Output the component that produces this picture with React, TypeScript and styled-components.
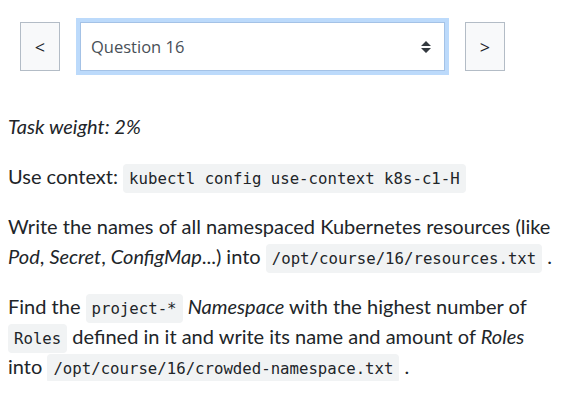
import React from 'react';
import styled, { createGlobalStyle } from 'styled-components';

const GlobalStyle = createGlobalStyle`
  body {
    margin: 0;
    background: #fff;
    color: #212529;
    font-family: Lato, "Open Sans", sans-serif;
  }
`;

const Page = styled.div`
  padding: 0 8px;
`;

const Nav = styled.div`
  display: flex;
  align-items: center;
  gap: 20px;
  padding: 22px 0 0 12px;
`;

const NavButton = styled.button`
  width: 40px;
  height: 49px;
  background: #f8f9fa;
  border: 1px solid #b3bcc6;
  border-radius: 0;
  color: #212529;
  font-family: "Open Sans", sans-serif;
  font-size: 18px;
  padding: 0;
`;

const SelectBox = styled.div`
  box-sizing: border-box;
  width: 365px;
  height: 49px;
  display: flex;
  align-items: center;
  justify-content: space-between;
  padding: 0 13px 0 10px;
  border: 1px solid #a4c2e6;
  box-shadow: 0 0 0 4px #bcdafb;
  color: #495057;
  font-family: "Open Sans", sans-serif;
  font-size: 16.5px;
`;

const Content = styled.div`
  margin-top: 40px;
  font-size: 20px;
  line-height: 30px;
`;

const P = styled.p`
  margin: 0 0 20px;
  &:last-child {
    margin-bottom: 0;
  }
`;

const Code = styled.code`
  font-family: "DejaVu Sans Mono", monospace;
  font-size: 15.7px;
  line-height: 1;
  background: #f1f3f4;
  border-radius: 4px;
  padding: 5px 6px;
  color: #212529;
`;

const SortIcon = () => (
  <svg width="10" height="12" viewBox="0 0 10 12">
    <path d="M5 0 L10 5 H0 Z M0 7 H10 L5 12 Z" fill="#343a40" />
  </svg>
);

export default function App() {
  return (
    <Page>
      <GlobalStyle />
      <Nav>
        <NavButton>&lt;</NavButton>
        <SelectBox>
          <span>Question 16</span>
          <SortIcon />
        </SelectBox>
        <NavButton>&gt;</NavButton>
      </Nav>
      <Content>
        <P><em>Task weight: 2%</em></P>
        <P>Use context: <Code>kubectl config use-context k8s-c1-H</Code></P>
        <P>
          Write the names of all namespaced Kubernetes resources (like <em>Pod</em>, <em>Secret</em>,{' '}
          <em>ConfigMap</em>...) into <Code>/opt/course/16/resources.txt</Code> .
        </P>
        <P>
          Find the <Code>project-*</Code> <em>Namespace</em> with the highest number of{' '}
          <Code>Roles</Code> defined in it and write its name and amount of <em>Roles</em> into{' '}
          <Code>/opt/course/16/crowded-namespace.txt</Code> .
        </P>
      </Content>
    </Page>
  );
}
